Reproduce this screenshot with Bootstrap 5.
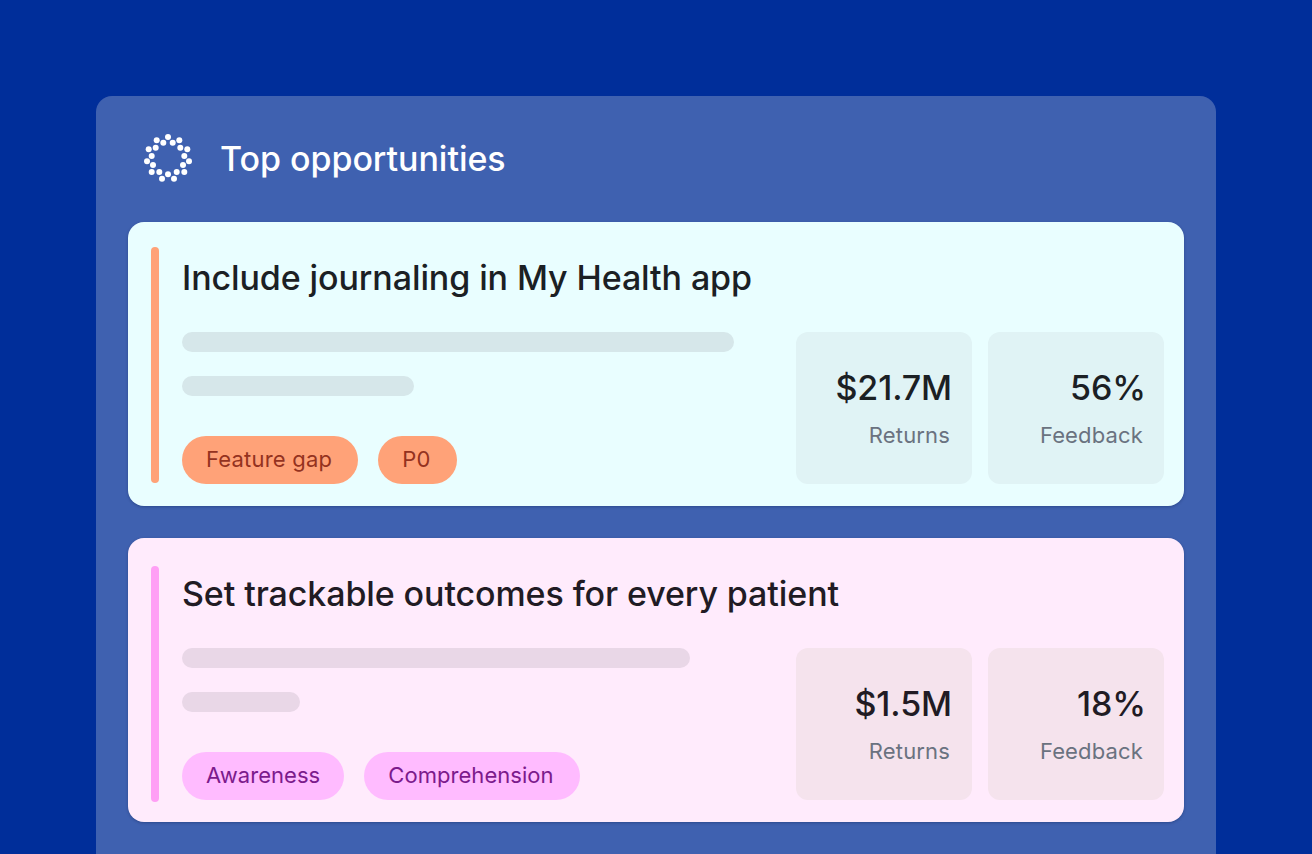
<!doctype html>
<html lang="en">
<head>
  <meta charset="utf-8">
  <meta name="viewport" content="width=device-width, initial-scale=1">
  <title>Top opportunities</title>
  <link href="https://cdn.jsdelivr.net/npm/bootstrap@5.3.0/dist/css/bootstrap.min.css" rel="stylesheet">
  <style>
    html, body { height: 100%; }
    body {
      background: #002e9a;
      font-family: "Inter", "Liberation Sans", sans-serif;
      overflow: hidden;
    }
    .panel-box {
      width: 1120px;
      height: 758px;
      margin: 96px 0 0 96px;
      padding: 0 32px;
      background: #3f61b0;
      border-radius: 16px 16px 0 0;
    }
    .panel-head { height: 126px; padding-left: 16px; gap: 28px; }
    .panel-head svg { margin-top: -3px; }
    .panel-head h1 { margin: 0; font-size: 34px; font-weight: 540; letter-spacing: -.05px; color: #fff; line-height: 38px; }
    .opp-card {
      height: 284px;
      margin-bottom: 32px;
      padding: 25px 20px 23px 23px;
      border-radius: 16px;
      box-shadow: 0 1px 3px rgba(0, 20, 60, .3);
    }
    .opp-card.teal { background: #e9feff; color: #1b2024; }
    .opp-card.pink { background: #ffebfc; color: #211b24; }
    .accent { width: 8px; height: 236px; border-radius: 4px; flex: none; margin-right: 23px; }
    .teal .accent, .teal .tag-pill { background: #ffa278; }
    .pink .accent { background: #ff9ff5; margin-top: 3px; }
    .pink .tag-pill { background: #ffbbff; }
    .opp-title { margin: 0; padding-top: 11px; font-size: 34px; font-weight: 540; letter-spacing: -.1px; line-height: 40px; height: 85px; }
    .skel { height: 20px; border-radius: 10px; margin-bottom: 24px; }
    .teal .skel { background: #d6e7ea; }
    .pink .skel { background: #e9d7e7; }
    .tag-row { gap: 20px; margin-top: 40px; }
    .tag-pill {
      height: 48px;
      border-radius: 24px;
      font-size: 22px;
      line-height: 46px;
    }
    .teal .tag-pill { color: #94321f; padding: 0 26px 0 24px; letter-spacing: .2px; }
    .pink .tag-pill { color: #7c1a8c; padding: 0 24px; letter-spacing: .05px; }
    .pink .tag-pill + .tag-pill { padding-right: 26px; }
    .stat-row { gap: 16px; }
    .stat-box {
      width: 176px;
      height: 152px;
      padding: 34px 20px 0 0;
      border-radius: 12px;
      text-align: right;
    }
    .teal .stat-box { background: #e0f3f5; }
    .pink .stat-box { background: #f5e3ed; }
    .stat-value { font-size: 34px; font-weight: 540; letter-spacing: -.1px; line-height: 44px; }
    .stat-box + .stat-box .stat-value { margin-right: -2px; }
    .stat-label { font-size: 22px; letter-spacing: .15px; line-height: 28px; margin-top: 11px; color: #6a7280; padding-right: 2px; }
    .stat-box + .stat-box .stat-label { padding-right: 1px; }
  </style>
</head>
<body>
  <div class="panel-box">
    <div class="panel-head d-flex align-items-center">
      <svg width="48" height="48" viewBox="0 0 48 48" fill="#fff">
        <circle cx="24" cy="3" r="3"/><circle cx="12.7" cy="6.3" r="3"/><circle cx="19.3" cy="8.7" r="3"/>
        <circle cx="28.7" cy="8.7" r="3"/><circle cx="35.3" cy="6.3" r="3"/><circle cx="11.7" cy="13.7" r="3"/>
        <circle cx="36.3" cy="13.7" r="3"/><circle cx="4.7" cy="15.3" r="3"/><circle cx="43.3" cy="15.3" r="3"/>
        <circle cx="7.7" cy="22" r="3"/><circle cx="40.3" cy="22" r="3"/><circle cx="3" cy="27.3" r="3"/>
        <circle cx="45" cy="27.3" r="3"/><circle cx="9" cy="31" r="3"/><circle cx="39" cy="31" r="3"/>
        <circle cx="7.7" cy="38" r="3"/><circle cx="15.3" cy="38" r="3"/><circle cx="32.7" cy="38" r="3"/>
        <circle cx="40.3" cy="38" r="3"/><circle cx="24" cy="40.3" r="3"/><circle cx="18" cy="44.7" r="3"/>
        <circle cx="30" cy="44.7" r="3"/>
      </svg>
      <h1>Top opportunities</h1>
    </div>

    <div class="opp-card teal d-flex">
      <div class="accent"></div>
      <div class="flex-grow-1">
        <h2 class="opp-title">Include journaling in My Health app</h2>
        <div class="d-flex justify-content-between">
          <div>
            <div class="skel" style="width: 552px"></div>
            <div class="skel" style="width: 232px"></div>
            <div class="tag-row d-flex">
              <span class="tag-pill">Feature gap</span>
              <span class="tag-pill">P0</span>
            </div>
          </div>
          <div class="stat-row d-flex">
            <div class="stat-box"><div class="stat-value">$21.7M</div><div class="stat-label">Returns</div></div>
            <div class="stat-box"><div class="stat-value">56%</div><div class="stat-label">Feedback</div></div>
          </div>
        </div>
      </div>
    </div>

    <div class="opp-card pink d-flex">
      <div class="accent"></div>
      <div class="flex-grow-1">
        <h2 class="opp-title">Set trackable outcomes for every patient</h2>
        <div class="d-flex justify-content-between">
          <div>
            <div class="skel" style="width: 508px"></div>
            <div class="skel" style="width: 118px"></div>
            <div class="tag-row d-flex">
              <span class="tag-pill">Awareness</span>
              <span class="tag-pill">Comprehension</span>
            </div>
          </div>
          <div class="stat-row d-flex">
            <div class="stat-box"><div class="stat-value">$1.5M</div><div class="stat-label">Returns</div></div>
            <div class="stat-box"><div class="stat-value">18%</div><div class="stat-label">Feedback</div></div>
          </div>
        </div>
      </div>
    </div>
  </div>
  <script src="https://cdn.jsdelivr.net/npm/bootstrap@5.3.0/dist/js/bootstrap.bundle.min.js"></script>
</body>
</html>
